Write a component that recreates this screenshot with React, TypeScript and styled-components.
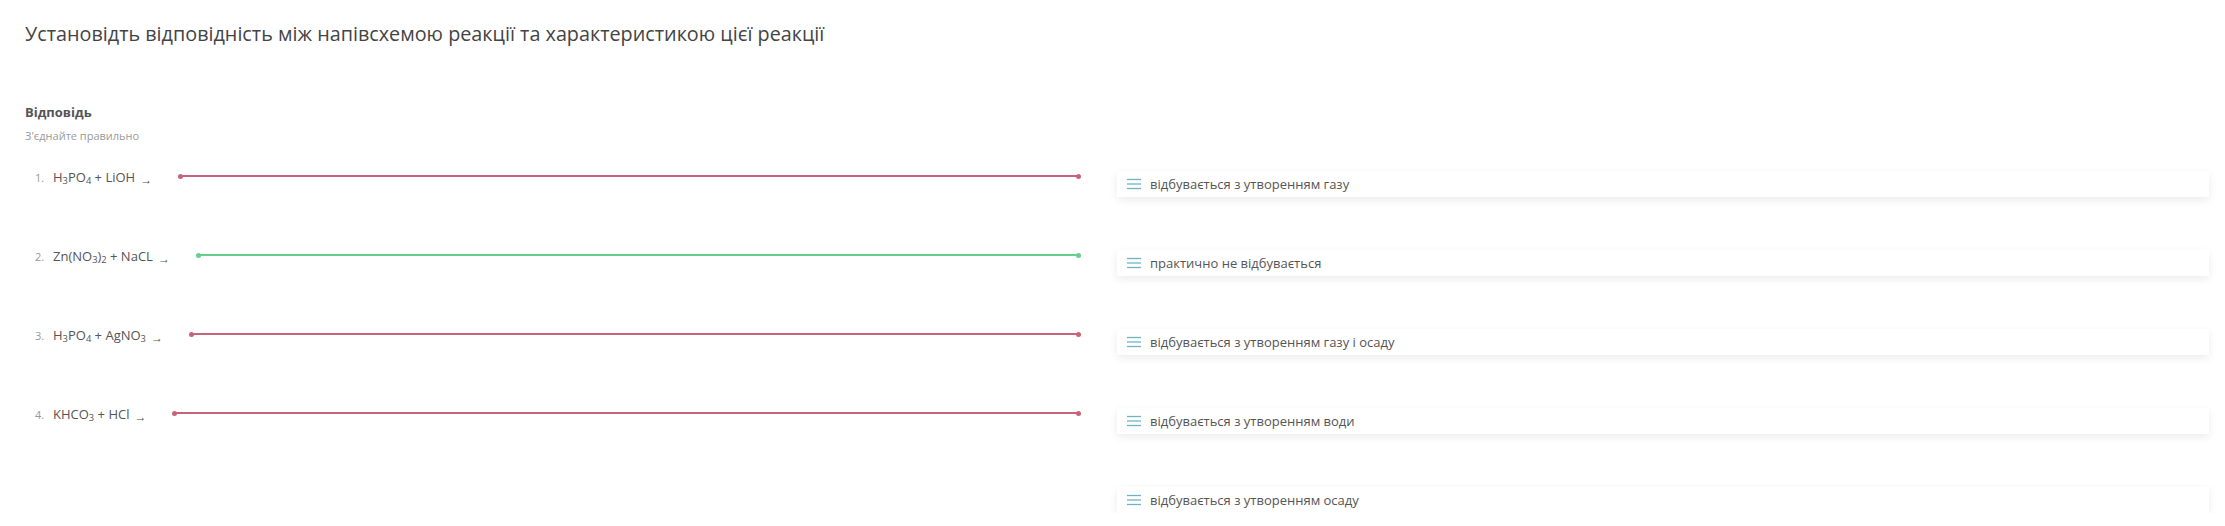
import React from "react";
import styled, { createGlobalStyle } from "styled-components";

const GlobalStyle = createGlobalStyle`
  html, body {
    margin: 0;
    padding: 0;
    background: #ffffff;
  }
  body {
    font-family: "Open Sans", "Noto Sans", sans-serif;
    color: #555;
  }
`;

const Page = styled.div`
  padding: 20px 16px 0 25px;
`;

const Title = styled.h1`
  margin: 0;
  font-size: 19.8px;
  line-height: 28px;
  font-weight: 400;
  color: #444;
`;

const Heading = styled.div`
  margin-top: 55px;
  font-size: 13px;
  line-height: 18px;
  font-weight: 700;
  color: #555;
`;

const Hint = styled.div`
  margin-top: 7px;
  font-size: 11px;
  line-height: 15px;
  color: #9a9a9a;
`;

const Answers = styled.div`
  margin-top: 21px;
  display: grid;
  grid-template-columns: 1055px 1fr;
  column-gap: 37px;
`;

const Column = styled.div<{ $offset?: number }>`
  display: flex;
  flex-direction: column;
  gap: 53px;
  padding-top: ${({ $offset }) => $offset || 0}px;
`;

const Row = styled.div`
  height: 26px;
  display: flex;
  align-items: center;
  padding-left: 10px;
`;

const Num = styled.span`
  font-size: 11px;
  color: #999;
  width: 18px;
  flex-shrink: 0;
`;

const Formula = styled.span`
  font-size: 13px;
  color: #555;
  white-space: nowrap;
`;

const Sub = styled.sub`
  font-size: 0.72em;
  vertical-align: -0.22em;
  line-height: 0;
`;

const Arrow = styled.span`
  font-size: 12px;
  margin-left: 5px;
  position: relative;
  top: 2px;
`;

const Link = styled.div<{ $ok?: boolean }>`
  position: relative;
  flex: 1;
  height: 2px;
  margin-left: 28px;
  margin-right: 1px;
  margin-top: -2px;
  background: ${({ $ok }) => ($ok ? "#66cf8c" : "#c8647a")};

  &::before,
  &::after {
    content: "";
    position: absolute;
    top: -1.5px;
    width: 5px;
    height: 5px;
    border-radius: 50%;
    background: inherit;
  }
  &::before {
    left: -2px;
  }
  &::after {
    right: -2px;
  }
`;

const Card = styled.div`
  height: 26px;
  display: flex;
  align-items: center;
  gap: 9px;
  padding: 0 10px;
  background: #fff;
  box-shadow: 0 3px 8px rgba(0, 0, 0, 0.08);
  font-size: 13px;
  color: #555;
`;

const Handle = () => (
  <svg width="14" height="12" viewBox="0 0 14 12">
    <g stroke="#6fb3c2" strokeWidth="1.3">
      <line x1="0" y1="1.5" x2="14" y2="1.5" />
      <line x1="0" y1="6" x2="14" y2="6" />
      <line x1="0" y1="10.5" x2="14" y2="10.5" />
    </g>
  </svg>
);

const reactions = [
  {
    id: 1,
    ok: false,
    formula: (
      <>
        H<Sub>3</Sub>PO<Sub>4</Sub> + LiOH
      </>
    ),
  },
  {
    id: 2,
    ok: true,
    formula: (
      <>
        Zn(NO<Sub>3</Sub>)<Sub>2</Sub> + NaCL
      </>
    ),
  },
  {
    id: 3,
    ok: false,
    formula: (
      <>
        H<Sub>3</Sub>PO<Sub>4</Sub> + AgNO<Sub>3</Sub>
      </>
    ),
  },
  {
    id: 4,
    ok: false,
    formula: (
      <>
        KHCO<Sub>3</Sub> + HCl
      </>
    ),
  },
];

const options = [
  "відбувається з утворенням газу",
  "практично не відбувається",
  "відбувається з утворенням газу і осаду",
  "відбувається з утворенням води",
  "відбувається з утворенням осаду",
];

export default function App() {
  return (
    <Page>
      <GlobalStyle />
      <Title>Установідть відповідність між напівсхемою реакції та характеристикою цієї реакції</Title>
      <Heading>Відповідь</Heading>
      <Hint>З'єднайте правильно</Hint>
      <Answers>
        <Column>
          {reactions.map((r) => (
            <Row key={r.id}>
              <Num>{r.id}.</Num>
              <Formula>
                {r.formula}
                <Arrow>→</Arrow>
              </Formula>
              <Link $ok={r.ok} />
            </Row>
          ))}
        </Column>
        <Column $offset={7}>
          {options.map((o) => (
            <Card key={o}>
              <Handle />
              {o}
            </Card>
          ))}
        </Column>
      </Answers>
    </Page>
  );
}
